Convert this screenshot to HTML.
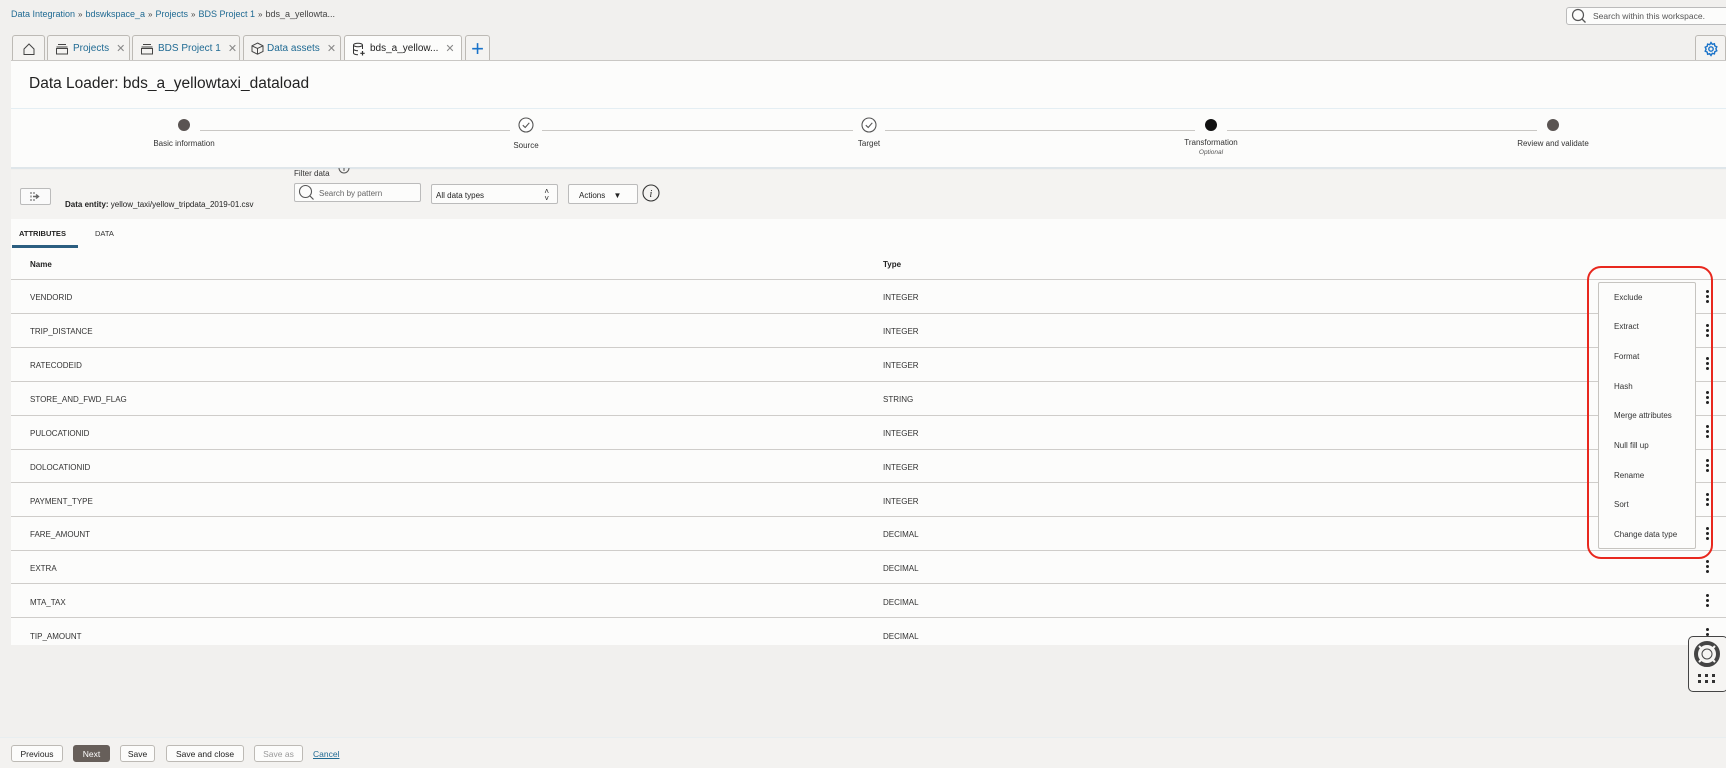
<!DOCTYPE html>
<html><head><meta charset="utf-8"><style>
*{box-sizing:border-box;margin:0;padding:0}
body{width:1726px;height:768px;overflow:hidden;background:#f1f0ee;font-family:"Liberation Sans",sans-serif;color:#222;position:relative;font-size:9px}
.a{position:absolute}
.bc{top:9px;left:11px;font-size:9px;color:#1f6a93;white-space:nowrap}
.bc span.s{color:#444;margin:0 3px;font-size:8px}
.tab{top:35px;height:26px;border:1px solid #bdbab5;border-bottom:none;background:#f4f3f1;border-radius:3px 3px 0 0;font-size:10px;color:#1f6a93;display:flex;align-items:center;padding-left:7px;white-space:nowrap;overflow:hidden}
.tab svg{flex-shrink:0}
.tab .x{color:#888;margin-left:7px;font-size:11px}
.tab.act{background:#fcfcfb;color:#222}
.panel{background:#fcfcfb}
.step{top:119px;width:12px;height:12px;border-radius:50%}
.dark{background:#5a5452}
.lbl{font-size:8px;color:#333;text-align:center;width:160px;top:139px}
.line{top:130px;height:1px;background:#c9c7c4}
.row{left:30px;font-size:8px;color:#333}
.typ{left:883px;font-size:8px;color:#333}
.hl{left:11px;width:1715px;height:1px;background:#cfcdca}
.dots{left:1706px;width:3px}
.dots i{display:block;width:3px;height:3px;background:#222;border-radius:50%;margin-bottom:2px}
.mi{left:1614px;font-size:8px;color:#333}
.btn{top:745px;height:17px;border:1px solid #bdbab5;border-radius:3px;background:#fcfcfb;font-size:8.5px;display:flex;align-items:center;justify-content:center;color:#222}
</style></head><body>
<div class="a bc">Data Integration<span class="s">»</span>bdswkspace_a<span class="s">»</span>Projects<span class="s">»</span>BDS Project 1<span class="s">»</span><span style="color:#444">bds_a_yellowta...</span></div>
<div class="a" style="left:1566px;top:7px;width:165px;height:18px;border:1px solid #bbb;border-radius:3px;background:#fcfcfb"></div>
<svg class="a" style="left:1571px;top:8px" width="16" height="16"><circle cx="7" cy="7" r="5.5" fill="none" stroke="#555" stroke-width="1.2"/><line x1="11" y1="11" x2="14.5" y2="14.5" stroke="#555" stroke-width="1.3"/></svg>
<div class="a" style="left:1593px;top:11px;font-size:8.5px;color:#555">Search within this workspace.</div>

<div class="a tab" style="left:12px;width:33px;padding-left:9px"><svg width="14" height="14"><path d="M2 7 L7 2 L12 7 V12.5 H2 Z" fill="none" stroke="#444" stroke-width="1"/></svg></div>
<div class="a tab" style="left:47px;width:83px"><svg width="14" height="12" style="margin-right:4px"><path d="M3 1.5H11M1.5 4H12.5M1.5 5.5H12.5V11H1.5Z" fill="none" stroke="#444" stroke-width="1"/></svg>Projects<span class="x">✕</span></div>
<div class="a tab" style="left:132px;width:108px"><svg width="14" height="12" style="margin-right:4px"><path d="M3 1.5H11M1.5 4H12.5M1.5 5.5H12.5V11H1.5Z" fill="none" stroke="#444" stroke-width="1"/></svg>BDS Project 1<span class="x">✕</span></div>
<div class="a tab" style="left:243px;width:98px"><svg width="13" height="13" style="margin-right:3px"><path d="M6.5 1 L12 3.8 V9.5 L6.5 12.2 L1 9.5 V3.8 Z M1 3.8 L6.5 6.5 L12 3.8 M6.5 6.5V12.2" fill="none" stroke="#444" stroke-width="1"/></svg>Data assets<span class="x">✕</span></div>
<div class="a tab act" style="left:344px;width:118px"><svg width="14" height="14" style="margin-right:4px"><ellipse cx="6" cy="3" rx="4.5" ry="1.8" fill="none" stroke="#333"/><path d="M1.5 3V11c0 1 2 1.8 4.5 1.8M10.5 3V7M1.5 7c0 1 2 1.8 4.5 1.8" fill="none" stroke="#333"/><path d="M10.5 9V13.5M8.3 11.3H12.7" stroke="#333" stroke-width="1.2"/></svg>bds_a_yellow...<span class="x">✕</span></div>
<div class="a tab" style="left:465px;width:25px;justify-content:center;padding:0;font-size:22px;color:#1a73c9;font-weight:300">+</div>
<div class="a tab" style="left:1695px;width:31px;padding-left:7px"><svg width="16" height="16" viewBox="0 0 16 16"><circle cx="8" cy="8" r="2.2" fill="none" stroke="#1a73c9" stroke-width="1.4"/><path d="M8 1.5l1.3 1.8 2.1-.6.4 2.2 2 .9-.9 2 .9 2-2 .9-.4 2.2-2.1-.6L8 14.5l-1.3-1.8-2.1.6-.4-2.2-2-.9.9-2-.9-2 2-.9.4-2.2 2.1.6z" fill="none" stroke="#1a73c9" stroke-width="1.4"/></svg></div>

<div class="a panel" style="left:11px;top:60px;width:1715px;height:48px;border-top:1px solid #c9c7c4"></div>
<div class="a" style="left:29px;top:75px;font-size:15.5px;color:#222">Data Loader: bds_a_yellowtaxi_dataload</div>
<div class="a panel" style="left:11px;top:108px;width:1715px;height:61px;border-top:1px solid #e4eef3;border-bottom:2px solid #dfe6ea"></div>
<div class="a line" style="left:200px;width:310px"></div>
<div class="a line" style="left:542px;width:311px"></div>
<div class="a line" style="left:885px;width:310px"></div>
<div class="a line" style="left:1227px;width:310px"></div>
<div class="a step dark" style="left:178px"></div>
<svg class="a" style="left:518px;top:117px" width="16" height="16"><circle cx="8" cy="8" r="7" fill="#fff" stroke="#555" stroke-width="1.1"/><path d="M4.8 8.2 L7.2 10.5 L11.3 5.8" fill="none" stroke="#555" stroke-width="1.1"/></svg>
<svg class="a" style="left:861px;top:117px" width="16" height="16"><circle cx="8" cy="8" r="7" fill="#fff" stroke="#555" stroke-width="1.1"/><path d="M4.8 8.2 L7.2 10.5 L11.3 5.8" fill="none" stroke="#555" stroke-width="1.1"/></svg>
<div class="a step" style="left:1205px;background:#111"></div>
<div class="a step dark" style="left:1547px"></div>
<div class="a lbl" style="left:104px">Basic information</div>
<div class="a lbl" style="left:446px;top:141px">Source</div>
<div class="a lbl" style="left:789px">Target</div>
<div class="a lbl" style="left:1131px;top:138px">Transformation<br><i style="font-size:6.5px;color:#555">Optional</i></div>
<div class="a lbl" style="left:1473px">Review and validate</div>

<div class="a" style="left:11px;top:170px;width:1715px;height:49px;background:#f4f3f1"></div>
<div class="a" style="left:20px;top:188px;width:31px;height:17px;border:1px solid #bbb;border-radius:2px;background:#fafafa"><svg width="29" height="15"><g fill="#aaa"><rect x="9" y="3" width="2" height="2"/><rect x="12" y="3" width="2" height="2"/><rect x="9" y="6.5" width="2" height="2"/><rect x="9" y="10" width="2" height="2"/><rect x="12" y="10" width="2" height="2"/></g><path d="M12 7.5H17M15 5.5L17.5 7.5L15 9.5" stroke="#666" stroke-width="1.4" fill="none"/></svg></div>
<div class="a" style="left:65px;top:200px;font-size:8px;color:#222"><b>Data entity:</b> yellow_taxi/yellow_tripdata_2019-01.csv</div>
<div class="a" style="left:294px;top:169px;font-size:8px;color:#333">Filter data</div>
<svg class="a" style="left:338px;top:166px" width="12" height="10"><path d="M1 2 A5 5 0 0 0 11 2" fill="none" stroke="#555"/><line x1="6" y1="2" x2="6" y2="5" stroke="#555"/></svg>
<div class="a" style="left:294px;top:183px;width:127px;height:19px;border:1px solid #bbb;border-radius:2px;background:#fcfcfb"></div>
<svg class="a" style="left:298px;top:184px" width="17" height="17"><circle cx="7.5" cy="7.5" r="6" fill="none" stroke="#555" stroke-width="1.1"/><line x1="12" y1="12" x2="15.5" y2="15.5" stroke="#555" stroke-width="1.2"/></svg>
<div class="a" style="left:319px;top:189px;font-size:8px;color:#666">Search by pattern</div>
<div class="a" style="left:431px;top:184px;width:127px;height:20px;border:1px solid #bbb;border-radius:2px;background:#fcfcfb;font-size:8px;padding:6px 0 0 4px">All data types<span style="position:absolute;right:8px;top:3px;font-size:8px;line-height:7px">˄<br>˅</span></div>
<div class="a" style="left:568px;top:184px;width:70px;height:20px;border:1px solid #bbb;border-radius:2px;background:#fcfcfb;font-size:8px;padding:6px 0 0 10px">Actions <span style="font-size:8px;margin-left:6px">▼</span></div>
<svg class="a" style="left:642px;top:184px" width="18" height="18"><circle cx="9" cy="9" r="8" fill="none" stroke="#333" stroke-width="1.1"/><text x="7.5" y="13" font-size="10" font-style="italic" font-family="Liberation Serif" fill="#222">i</text></svg>

<div class="a panel" style="left:11px;top:219px;width:1715px;height:426px"></div>
<div class="a" style="left:19px;top:229px;font-size:7.5px;font-weight:bold;color:#222">ATTRIBUTES</div>
<div class="a" style="left:95px;top:229px;font-size:7.5px;color:#333">DATA</div>
<div class="a" style="left:12px;top:245px;width:66px;height:3px;background:#2b5e80"></div>
<div class="a" style="left:30px;top:260px;font-size:8px;font-weight:bold">Name</div>
<div class="a" style="left:883px;top:260px;font-size:8px;font-weight:bold">Type</div>
<div class="a hl" style="top:279px"></div>

<div class="a row" style="top:293px">VENDORID</div><div class="a typ" style="top:293px">INTEGER</div><div class="a hl" style="top:313px"></div>
<div class="a row" style="top:327px">TRIP_DISTANCE</div><div class="a typ" style="top:327px">INTEGER</div><div class="a hl" style="top:347px"></div>
<div class="a row" style="top:361px">RATECODEID</div><div class="a typ" style="top:361px">INTEGER</div><div class="a hl" style="top:381px"></div>
<div class="a row" style="top:395px">STORE_AND_FWD_FLAG</div><div class="a typ" style="top:395px">STRING</div><div class="a hl" style="top:415px"></div>
<div class="a row" style="top:429px">PULOCATIONID</div><div class="a typ" style="top:429px">INTEGER</div><div class="a hl" style="top:449px"></div>
<div class="a row" style="top:463px">DOLOCATIONID</div><div class="a typ" style="top:463px">INTEGER</div><div class="a hl" style="top:482px"></div>
<div class="a row" style="top:497px">PAYMENT_TYPE</div><div class="a typ" style="top:497px">INTEGER</div><div class="a hl" style="top:516px"></div>
<div class="a row" style="top:530px">FARE_AMOUNT</div><div class="a typ" style="top:530px">DECIMAL</div><div class="a hl" style="top:550px"></div>
<div class="a row" style="top:564px">EXTRA</div><div class="a typ" style="top:564px">DECIMAL</div><div class="a hl" style="top:583px"></div>
<div class="a row" style="top:598px">MTA_TAX</div><div class="a typ" style="top:598px">DECIMAL</div><div class="a hl" style="top:617px"></div>
<div class="a row" style="top:632px">TIP_AMOUNT</div><div class="a typ" style="top:632px">DECIMAL</div>

<div class="a dots" style="top:290px"><i></i><i></i><i></i></div>
<div class="a dots" style="top:324px"><i></i><i></i><i></i></div>
<div class="a dots" style="top:357px"><i></i><i></i><i></i></div>
<div class="a dots" style="top:391px"><i></i><i></i><i></i></div>
<div class="a dots" style="top:425px"><i></i><i></i><i></i></div>
<div class="a dots" style="top:459px"><i></i><i></i><i></i></div>
<div class="a dots" style="top:493px"><i></i><i></i><i></i></div>
<div class="a dots" style="top:527px"><i></i><i></i><i></i></div>
<div class="a dots" style="top:560px"><i></i><i></i><i></i></div>
<div class="a dots" style="top:594px"><i></i><i></i><i></i></div>
<div class="a dots" style="top:628px"><i></i><i></i><i></i></div>

<div class="a" style="left:1598px;top:282px;width:98px;height:267px;background:#fcfcfb;border:1px solid #c6c4c0;border-radius:2px"></div>
<div class="a mi" style="top:293px">Exclude</div>
<div class="a mi" style="top:322px">Extract</div>
<div class="a mi" style="top:352px">Format</div>
<div class="a mi" style="top:382px">Hash</div>
<div class="a mi" style="top:411px">Merge attributes</div>
<div class="a mi" style="top:441px">Null fill up</div>
<div class="a mi" style="top:471px">Rename</div>
<div class="a mi" style="top:500px">Sort</div>
<div class="a mi" style="top:530px">Change data type</div>
<div class="a" style="left:1587px;top:266px;width:126px;height:293px;border:2px solid #e8281e;border-radius:14px"></div>

<div class="a" style="left:1688px;top:636px;width:40px;height:56px;border:1.5px solid #444;border-radius:5px;background:#f6f5f3"></div>
<svg class="a" style="left:1693px;top:640px" width="28" height="28"><circle cx="14" cy="14" r="11" fill="none" stroke="#444" stroke-width="4"/><circle cx="14" cy="14" r="5" fill="#f6f5f3" stroke="#444" stroke-width="1"/><g stroke="#f6f5f3" stroke-width="2"><line x1="6" y1="6" x2="10" y2="10"/><line x1="22" y1="6" x2="18" y2="10"/><line x1="6" y1="22" x2="10" y2="18"/><line x1="22" y1="22" x2="18" y2="18"/></g></svg>
<svg class="a" style="left:1698px;top:674px" width="20" height="12"><g fill="#333"><rect x="0" y="0" width="3" height="3"/><rect x="7" y="0" width="3" height="3"/><rect x="14" y="0" width="3" height="3"/><rect x="0" y="6" width="3" height="3"/><rect x="7" y="6" width="3" height="3"/><rect x="14" y="6" width="3" height="3"/></g></svg>

<div class="a" style="left:0;top:737px;width:1726px;height:31px;background:#f3f2f0;border-top:1px solid #e8eef0"></div>
<div class="a btn" style="left:11px;width:52px">Previous</div>
<div class="a btn" style="left:73px;width:37px;background:#675f5a;border-color:#675f5a;color:#fff">Next</div>
<div class="a btn" style="left:120px;width:35px">Save</div>
<div class="a btn" style="left:166px;width:78px">Save and close</div>
<div class="a btn" style="left:254px;width:49px;color:#999">Save as</div>
<div class="a" style="left:313px;top:749px;font-size:8.5px;color:#1f6a93;text-decoration:underline">Cancel</div>
</body></html>
